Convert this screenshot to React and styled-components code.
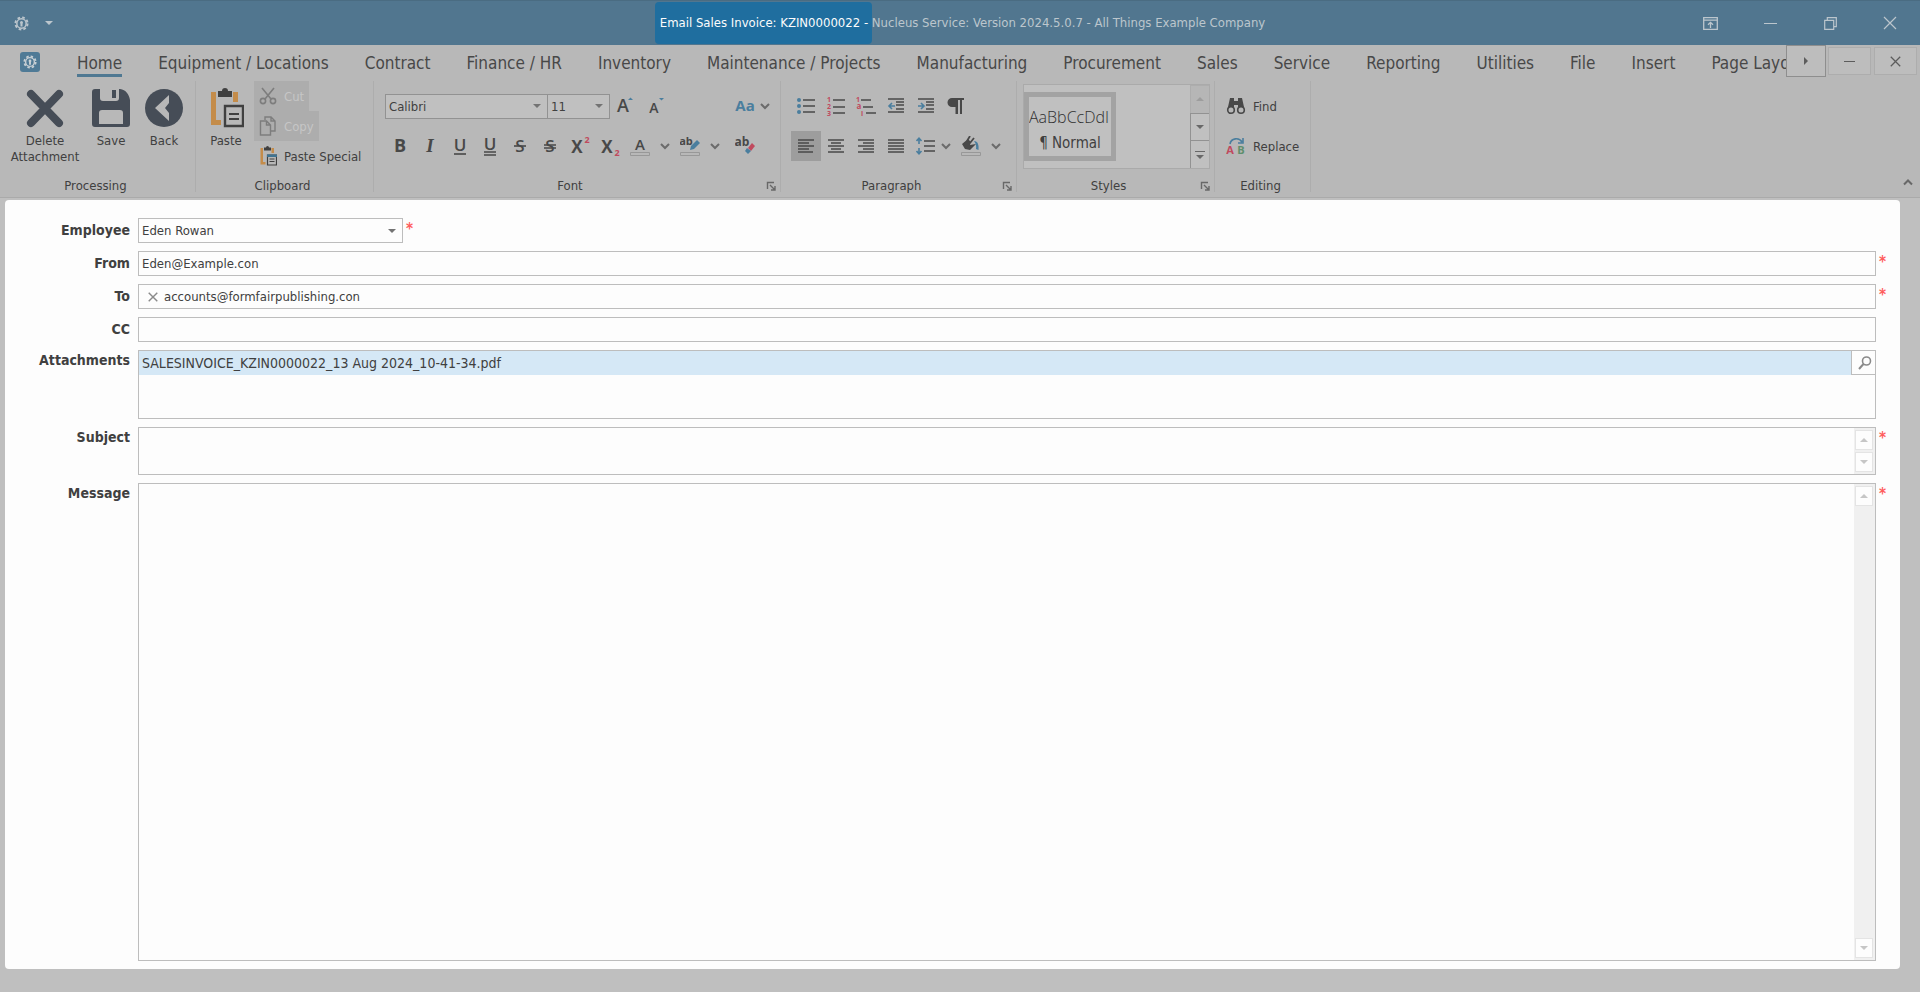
import React from "react";
import styled, { createGlobalStyle } from "styled-components";

const GlobalStyle = createGlobalStyle`
  * {
    box-sizing: border-box;
  }

  body {
    margin: 0;
    background: #bfbfbf;
    color: #404040;
    font-family: "DejaVu Sans Condensed", "Noto Sans", sans-serif;
    font-size: 13px;
  }

  button, input, select, textarea {
    font: inherit;
    color: inherit;
  }

  button {
    display: flex;
    align-items: center;
    justify-content: center;
    padding: 0;
    border: 0;
    background: none;
  }
`;

const Window = styled.div`
  display: flex;
  flex-direction: column;
  min-height: 100vh;
`;

/* title bar */

const TitleBar = styled.header`
  display: grid;
  grid-template-columns: 1fr auto 1fr;
  align-items: center;
  height: 45px;
  background: #51768f;
  border-top: 1px solid #4a6c82;
  color: #bcc6cd;
`;

const QuickAccess = styled.div`
  display: flex;
  align-items: center;
  gap: 16px;
  padding-left: 14px;
`;

const WindowTitle = styled.h1`
  display: flex;
  align-items: center;
  margin: 0;
  font-size: 13px;
  font-weight: normal;
  line-height: 42px;
  white-space: pre;
`;

const TitleMark = styled.span`
  padding-left: 5px;
  border-radius: 4px;
  background: #1f6e9f;
  color: #fcfcfc;
`;

const WindowButtons = styled.div`
  display: flex;
  justify-content: flex-end;
`;

const WindowButton = styled.button`
  width: 60px;
  height: 42px;
`;

/* tab strip */

const TabStrip = styled.nav`
  display: flex;
  height: 36px;
  background: #b8b8b8;
`;

const AppButton = styled.button`
  width: 20px;
  height: 20px;
  margin: 7px 37px 0 20px;
  flex: none;
  border-radius: 3px;
  background: #4f7a96;
  color: #c8d0d5;
`;

const Tabs = styled.div`
  display: flex;
  flex: 1;
  gap: 36px;
  min-width: 0;
  overflow: hidden;
`;

const Tab = styled.a`
  flex: none;
  height: 32px;
  border-bottom: 3px solid ${({ $active }) => ($active ? "#4f7892" : "transparent")};
  color: #484848;
  font-size: 17px;
  line-height: 36px;
  text-decoration: none;
  white-space: nowrap;
`;

const StripButton = styled.button`
  width: ${({ $scroll }) => ($scroll ? 40 : 43)}px;
  height: ${({ $scroll }) => ($scroll ? 32 : 28)}px;
  margin: ${({ $scroll }) => ($scroll ? "0 2px 0 0" : "2px 3px 0 0")};
  flex: none;
  border: 1px solid ${({ $scroll }) => ($scroll ? "#8e8e8e" : "#adadad")};
  background: #bdbdbd;
  color: #5c5c5c;
`;

/* ribbon */

const Ribbon = styled.section`
  display: flex;
  height: 117px;
  border-bottom: 1px solid #aaaaaa;
  background: #b8b8b8;
`;

const Group = styled.div`
  display: flex;
  flex-direction: column;
  flex: none;
  width: ${({ $width }) => $width}px;
  height: 111px;
  border-right: 1px solid #adadad;
`;

const GroupBody = styled.div`
  display: flex;
  flex: 1;
  padding-left: ${({ $indent }) => $indent || 0}px;
`;

const GroupFooter = styled.div`
  display: flex;
  align-items: center;
  height: 12px;
  padding-right: 4px;
  line-height: 12px;
  text-align: center;
`;

const GroupName = styled.span`
  flex: 1;
`;

const LargeButton = styled.button`
  flex-direction: column;
  justify-content: flex-start;
  align-self: flex-start;
  width: ${({ $width }) => $width}px;
  padding-top: 7px;
  line-height: 16px;

  svg {
    margin-bottom: 5px;
  }
`;

const Stack = styled.div`
  display: flex;
  flex-direction: column;
  align-items: flex-start;
  margin-top: ${({ $top }) => $top || 0}px;
  gap: ${({ $gap }) => $gap || 0}px;
`;

const SmallButton = styled.button`
  height: 30px;
  padding: 0 5px;
  gap: 7px;
  white-space: nowrap;

  &:disabled {
    background: #adadad;
    color: #c6c6c6;
  }
`;

const Tools = styled.div`
  display: flex;
  align-items: center;
  height: 30px;
`;

const Tool = styled.button`
  width: 30px;
  height: 30px;
  background: ${({ $active }) => ($active ? "#9d9d9d" : "none")};
`;

const MenuArrow = styled.button`
  width: ${({ $tight }) => ($tight ? 10 : 20)}px;
  height: 30px;
  color: #6b6b6b;
`;

const Spacer = styled.span`
  width: ${({ $width }) => $width}px;
`;

const Combo = styled.div`
  display: grid;
  grid-template-columns: 1fr 20px;
  align-items: center;
  width: ${({ $width }) => $width}px;
  height: 25px;
  border: 1px solid ${({ $muted }) => ($muted ? "#929292" : "#bdbdbd")};
  background: ${({ $muted }) => ($muted ? "#c0c0c0" : "#fdfdfd")};

  & + & {
    border-left: 0;
  }

  select {
    grid-area: 1 / 1 / 2 / 3;
    width: 100%;
    height: 100%;
    padding: 0 20px 0 3px;
    border: 0;
    background: none;
    appearance: none;
  }

  svg {
    grid-area: 1 / 2;
    justify-self: center;
    color: #737373;
    pointer-events: none;
  }
`;

const Gallery = styled.div`
  display: flex;
  width: 187px;
  height: 85px;
  margin-top: 3px;
  border: 1px solid #aaaaaa;
  background: #c0c0c0;
`;

const StyleTile = styled.button`
  flex-direction: column;
  align-items: stretch;
  justify-content: flex-start;
  width: 92px;
  height: 69px;
  margin: 7px auto 0 0;
  padding-top: 6px;
  overflow: hidden;
  border: 5px solid #a3a3a3;
  white-space: nowrap;
`;

const StyleSample = styled.span`
  overflow: hidden;
  color: #303030;
  font-family: "Open Sans", "Noto Sans", sans-serif;
  font-size: 16px;
  font-weight: 300;
  line-height: 28px;
  text-align: left;
`;

const StyleName = styled.span`
  font-size: 15px;
  line-height: 25px;
`;

const GalleryNav = styled.div`
  display: flex;
  flex-direction: column;
  width: 19px;

  button {
    flex: 1;
    border: 1px solid #929292;
    border-width: 1px 0 0 1px;
    color: #686868;
  }

  button:disabled {
    border-color: #adadad;
    background: #b6b6b6;
    color: #9d9d9d;
  }
`;

const Collapse = styled.button`
  width: 20px;
  height: 20px;
  margin: auto 2px 5px auto;
  color: #686868;
`;

/* mail form */

const Form = styled.form`
  display: flex;
  flex-direction: column;
  flex: 1;
  gap: 8px;
  margin: 2px 20px 23px 5px;
  padding: 18px 0 8px;
  border-radius: 4px;
  background: #fdfdfd;
`;

const Row = styled.div`
  display: flex;
  flex: ${({ $grow }) => ($grow ? 1 : "none")};
`;

const Label = styled.label`
  width: 125px;
  margin-right: 8px;
  flex: none;
  font-size: 14px;
  font-weight: bold;
  line-height: ${({ $top }) => ($top ? 20 : 25)}px;
  text-align: right;
`;

const Star = styled.span`
  width: 24px;
  padding-left: 3px;
  flex: none;
  color: #ff5c5c;
  font-size: 15px;
  font-weight: bold;
  line-height: 22px;
`;

const Field = styled.div`
  display: flex;
  align-items: center;
  flex: 1;
  min-width: 0;
  min-height: ${({ $height }) => $height || 25}px;
  border: 1px solid #bdbdbd;
  background: #fdfdfd;
`;

const TextInput = styled.input`
  flex: 1;
  min-width: 0;
  height: 23px;
  padding: 0 3px;
  border: 0;
  outline: 0;
  background: none;
`;

const TextArea = styled.textarea`
  flex: 1;
  align-self: stretch;
  min-width: 0;
  padding: 3px;
  border: 0;
  outline: 0;
  background: none;
  resize: none;
`;

const Token = styled.span`
  display: flex;
  align-items: center;
  gap: 6px;
  padding-left: 9px;
  color: #404040;

  button {
    color: #8a8a8a;
  }
`;

const FileList = styled.ul`
  flex: 1;
  align-self: flex-start;
  margin: 0;
  padding: 0;
  list-style: none;
`;

const FileItem = styled.li`
  height: 24px;
  padding-left: 3px;
  background: #d5e8f6;
  font-size: 14px;
  line-height: 24px;
`;

const BrowseButton = styled.button`
  justify-content: flex-end;
  align-self: flex-start;
  width: 24px;
  height: 24px;
  padding-right: 3px;
  border: 1px solid #bdbdbd;
  border-width: 0 0 1px 1px;
  color: #8a8a8a;
`;

const ScrollTrack = styled.div`
  display: flex;
  flex-direction: column;
  justify-content: space-between;
  align-self: stretch;
  width: 21px;
  padding: 2px 2px 2px 1px;
  background: #f0f0f0;

  button {
    width: 18px;
    height: 20px;
    border: 1px solid #e4e4e4;
    background: #fdfdfd;
    color: #c6c6c6;
  }
`;

/* icons */

const Triangle = ({ dir = "down", size = 8 }) => {
  const points = {
    down: "0,2 8,2 4,6",
    up: "0,6 8,6 4,2",
    right: "2,0 6,4 2,8",
  };
  return (
    <svg width={size} height={size} viewBox="0 0 8 8" fill="currentColor">
      <polygon points={points[dir]} />
    </svg>
  );
};

const Chevron = ({ up }) => (
  <svg width="10" height="10" viewBox="0 0 10 10" fill="none" stroke="currentColor" strokeWidth="2">
    <path d={up ? "M1 7.5l4-4 4 4" : "M1 3l4 4 4-4"} />
  </svg>
);

const Cross = ({ size, width = 1.2 }) => (
  <svg width={size} height={size} viewBox="0 0 14 14" fill="none" stroke="currentColor" strokeWidth={width}>
    <path d="M1 1l12 12M13 1L1 13" />
  </svg>
);

const Dash = ({ size }) => (
  <svg width={size} height="4" viewBox={`0 0 ${size} 4`}>
    <path d={`M0 2.5H${size}`} stroke="currentColor" />
  </svg>
);

const Gear = ({ size = 15 }) => (
  <svg width={size} height={size} viewBox="0 0 16 16" fill="none" stroke="currentColor">
    <circle cx="8" cy="8" r="6.5" strokeWidth="2" strokeDasharray="2.8 2.3" />
    <circle cx="8" cy="8" r="5" strokeWidth="1.6" />
    <circle cx="8" cy="6.8" r="1.6" fill="currentColor" stroke="none" />
    <path d="M8 8v3.200" strokeWidth="2.2" />
  </svg>
);

const DisplayOptions = () => (
  <svg width="15" height="13" viewBox="0 0 15 13" fill="none" stroke="currentColor" strokeWidth="1.3">
    <path d="M.7.7h13.6v11.6H.7zM.7 3.2h13.6M7.5 11V5.5M5 7.8l2.5-2.5L10 7.8" />
  </svg>
);

const Restore = () => (
  <svg width="13" height="13" viewBox="0 0 13 13" fill="none" stroke="currentColor" strokeWidth="1.2">
    <path d="M.7 3.3h9v9h-9zM3.3 3V.7h9v9H10" />
  </svg>
);

const DeleteIcon = () => (
  <svg width="38" height="40" viewBox="0 0 38 40" stroke="#464d57" strokeWidth="8" strokeLinecap="round">
    <path d="M5 6l28 29M33 6L5 35" />
  </svg>
);

const SaveIcon = () => (
  <svg width="38" height="40" viewBox="0 0 38 40">
    <path
      fillRule="evenodd"
      fill="#464d57"
      d="M3 1h5v9a3 3 0 0 0 3 3h13a3 3 0 0 0 3-3V1h1c6 1 9 5 10 11v24a3 3 0 0 1-3 3H3a3 3 0 0 1-3-3V4a3 3 0 0 1 3-3zM10 22a3 3 0 0 0-3 3v11h24V25a3 3 0 0 0-3-3z"
    />
    <path d="M20 2h4v8h-4z" fill="#464d57" />
  </svg>
);

const BackIcon = () => (
  <svg width="38" height="40" viewBox="0 0 38 40">
    <circle cx="19" cy="20" r="19" fill="#464d57" />
    <path d="M24 7v8l-4 5 4 5v8L10 20z" fill="#b8b8b8" />
  </svg>
);

const PasteIcon = ({ large }) => (
  <svg width={large ? 36 : 18} height={large ? 40 : 20} viewBox="0 0 36 40">
    <path d="M3 4h5v28h5v5H3zM25 4h5v10h-5z" fill="#c48c4a" />
    <path d="M10 3h4a3 3 0 0 1 6 0h4v6H10z" fill="#404040" />
    <path d="M17 18h18v20H17z" fill="none" stroke="#404040" strokeWidth="2.4" />
    {!large && <path d="M16 17h20v5H16z" fill="#3f7391" />}
    <path d="M21 26h10M21 31h10" stroke="#404040" strokeWidth="2.2" />
  </svg>
);

const CutIcon = () => (
  <svg width="18" height="18" viewBox="0 0 18 18" fill="none" stroke="#7d7d7d" strokeWidth="1.6">
    <circle cx="4" cy="14" r="2.6" />
    <circle cx="14" cy="14" r="2.6" />
    <path d="M3 1l9 11M15 1L6 12" />
  </svg>
);

const CopyIcon = () => (
  <svg width="18" height="20" viewBox="0 0 18 20" fill="none" stroke="#7d7d7d" strokeWidth="1.4">
    <path d="M6 4V1h6l4 4v10h-4M12 1v4h4" />
    <path d="M1.5 5h6l4 4v10h-10zM7.5 5v4h4" />
  </svg>
);

const Glyph = ({ children, size = 20 }) => (
  <svg width={size} height={size} viewBox="0 0 20 20" fontFamily="Open Sans, Noto Sans, sans-serif">
    {children}
  </svg>
);

const Letter = ({ x = 10, y = 15, size = 17, color = "#484848", weight = 600, children, ...rest }) => (
  <text x={x} y={y} fontSize={size} fill={color} fontWeight={weight} textAnchor="middle" {...rest}>
    {children}
  </text>
);

const BLUE = "#4a7e9e";
const RED = "#c04a5e";
const DARK = "#484848";

const Bars = ({ rows, color = DARK }) => (
  <path d={rows.map(([x, y, w]) => `M${x} ${y}h${w}`).join("")} stroke={color} strokeWidth="1.6" />
);

const Swatch = () => <path d="M.5 16.5h19v3H.5z" fill="none" stroke="#989898" />;

const alignRows = {
  left: [[2, 4, 16], [2, 7, 11], [2, 10, 16], [2, 13, 11], [2, 16, 15]],
  center: [[2, 4, 16], [5, 7, 10], [2, 10, 16], [5, 13, 10], [2, 16, 16]],
  right: [[2, 4, 16], [7, 7, 11], [2, 10, 16], [7, 13, 11], [2, 16, 16]],
  justify: [[2, 4, 16], [2, 7, 16], [2, 10, 16], [2, 13, 16], [2, 16, 16]],
};

const AlignIcon = ({ type }) => (
  <Glyph>
    <Bars rows={alignRows[type]} />
  </Glyph>
);

const BulletsIcon = () => (
  <Glyph>
    <circle cx="3" cy="4" r="2" fill={BLUE} />
    <circle cx="3" cy="10" r="2" fill={BLUE} />
    <circle cx="3" cy="16" r="2" fill={BLUE} />
    <Bars rows={[[7, 4, 12], [7, 10, 12], [7, 16, 12]]} />
  </Glyph>
);

const NumbersIcon = () => (
  <Glyph>
    <Letter x="3" y="6" size="7" color={RED} weight="700">1</Letter>
    <Letter x="3" y="13" size="7" color={RED} weight="700">2</Letter>
    <Letter x="3" y="20" size="7" color={RED} weight="700">3</Letter>
    <Bars rows={[[7, 4, 12], [7, 11, 12], [7, 17, 12]]} />
  </Glyph>
);

const MultiLevelIcon = () => (
  <Glyph>
    <Letter x="2" y="6" size="7" color={RED} weight="700">1</Letter>
    <Letter x="3" y="13" size="8" color={RED} weight="700">a</Letter>
    <Letter x="6" y="20" size="7" color={RED} weight="700">i</Letter>
    <Bars rows={[[5, 4, 10], [7, 11, 10], [10, 17, 10]]} />
  </Glyph>
);

const IndentIcon = ({ out }) => (
  <Glyph>
    <Bars rows={[[2, 3, 16], [2, 16, 16], [10, 6, 8], [10, 9, 8], [10, 13, 8]]} />
    <path
      d={out ? "M9 10H3M6 7l-3 3 3 3" : "M2 10h6M5 7l3 3-3 3"}
      fill="none"
      stroke={BLUE}
      strokeWidth="1.6"
    />
  </Glyph>
);

const SpacingIcon = () => (
  <Glyph>
    <path d="M3 8V2M.5 5L3 2.2 5.500 5M3 12v6M.5 15L3 17.8 5.500 15" fill="none" stroke={BLUE} strokeWidth="1.6" />
    <Bars rows={[[8, 5, 11], [8, 10, 11], [8, 15, 11]]} />
  </Glyph>
);

const FillIcon = () => (
  <Glyph>
    <path d="M1 8l6-5 3 3-1 3 6-1-6 6-5-1z" fill={DARK} />
    <path d="M6 5l3-5M9 7l4-5" stroke={DARK} strokeWidth="1.8" />
    <path d="M13 5c4 0 5 4 4.500 9l-2.500-1c.5-3 0-5-2-8z" fill={BLUE} />
    <Swatch />
  </Glyph>
);

const MarkerIcon = () => (
  <Glyph>
    <Letter x="6" y="9" size="11" weight="700">ab</Letter>
    <path d="M10 14l1-4 6-6 3 3-6 6z" fill={BLUE} />
    <Swatch />
  </Glyph>
);

const ClearIcon = () => (
  <Glyph>
    <Letter x="7" y="10" size="12" weight="700">ab</Letter>
    <path d="M13 12l4-5 3 3-4 5z" fill={RED} />
    <path d="M10 15l2-3 4 3-3 3z" fill={BLUE} />
  </Glyph>
);

const FindIcon = () => (
  <Glyph>
    <path d="M4 2h4v3h4V2h4l2 9h-6V9H8v2H2z" fill={DARK} />
    <circle cx="5" cy="14" r="3.300" fill="none" stroke={DARK} strokeWidth="1.6" />
    <circle cx="15" cy="14" r="3.300" fill="none" stroke={DARK} strokeWidth="1.6" />
  </Glyph>
);

const ReplaceIcon = () => (
  <Glyph>
    <Letter x="4" y="18" size="11" color={RED} weight="700">A</Letter>
    <Letter x="15" y="18" size="11" color="#5e8f6c" weight="700">B</Letter>
    <path d="M4 8c1-6 9-7 12-2M17 2v5h-5" fill="none" stroke={BLUE} strokeWidth="1.6" />
  </Glyph>
);

const LauncherIcon = () => (
  <svg width="10" height="10" viewBox="0 0 10 10" fill="none" stroke="#686868">
    <path d="M1.500 8V1.500H8M4 4l5 5M9 5v4H5" strokeWidth="1.4" />
  </svg>
);

const SearchIcon = () => (
  <svg width="14" height="14" viewBox="0 0 14 14" fill="none" stroke="currentColor" strokeWidth="1.6">
    <circle cx="8.500" cy="5" r="4" />
    <path d="M5.500 8L1 13" strokeWidth="2" />
  </svg>
);

/* parts */

const tabs = [
  "Home",
  "Equipment / Locations",
  "Contract",
  "Finance / HR",
  "Inventory",
  "Maintenance / Projects",
  "Manufacturing",
  "Procurement",
  "Sales",
  "Service",
  "Reporting",
  "Utilities",
  "File",
  "Insert",
  "Page Layout",
];

const RibbonGroup = ({ name, width, indent, launcher, children }) => (
  <Group $width={width}>
    <GroupBody $indent={indent}>{children}</GroupBody>
    <GroupFooter>
      <GroupName>{name}</GroupName>
      {launcher && (
        <button type="button" aria-label={`${name} settings`}>
          <LauncherIcon />
        </button>
      )}
    </GroupFooter>
  </Group>
);

const IconTool = ({ label, active, children }) => (
  <Tool type="button" aria-label={label} $active={active}>
    {children}
  </Tool>
);

const Arrow = ({ label, tight }) => (
  <MenuArrow type="button" aria-label={label} $tight={tight}>
    <Chevron />
  </MenuArrow>
);

const ScrollButtons = ({ name }) => (
  <ScrollTrack>
    <button type="button" aria-label={`Scroll ${name} up`}>
      <Triangle dir="up" />
    </button>
    <button type="button" aria-label={`Scroll ${name} down`}>
      <Triangle />
    </button>
  </ScrollTrack>
);

const FontGroup = () => (
  <RibbonGroup name="Font" width={407} indent={11} launcher>
    <Stack $top={10} $gap={10}>
      <Tools>
        <Combo $width={163} $muted>
          <select aria-label="Font name">
            <option>Calibri</option>
          </select>
          <Triangle />
        </Combo>
        <Combo $width={62} $muted>
          <select aria-label="Font size">
            <option>11</option>
          </select>
          <Triangle />
        </Combo>
        <IconTool label="Grow font">
          <Glyph>
            <Letter x="8" y="16" size="18">A</Letter>
            <path d="M13 4l2.500-2.500L18 4z" fill={BLUE} />
          </Glyph>
        </IconTool>
        <IconTool label="Shrink font">
          <Glyph>
            <Letter x="9" y="17" size="14">A</Letter>
            <path d="M14 2h5l-2.500 2.500z" fill={BLUE} />
          </Glyph>
        </IconTool>
        <Spacer $width={60} />
        <IconTool label="Change case">
          <Glyph>
            <Letter y="15" size="15" color={BLUE} weight="700">Aa</Letter>
          </Glyph>
        </IconTool>
        <Arrow label="Case options" tight />
      </Tools>
      <Tools>
        <IconTool label="Bold">
          <Glyph>
            <Letter weight="700" size="18" y="16">B</Letter>
          </Glyph>
        </IconTool>
        <IconTool label="Italic">
          <Glyph>
            <Letter fontFamily="Liberation Serif, serif" fontStyle="italic" size="19" y="16">I</Letter>
          </Glyph>
        </IconTool>
        <IconTool label="Underline">
          <Glyph>
            <Letter>U</Letter>
            <Bars rows={[[4, 18, 12]]} />
          </Glyph>
        </IconTool>
        <IconTool label="Double underline">
          <Glyph>
            <Letter y="14">U</Letter>
            <Bars rows={[[4, 16, 12], [4, 19, 12]]} />
          </Glyph>
        </IconTool>
        <IconTool label="Strikethrough">
          <Glyph>
            <Letter y="16">S</Letter>
            <Bars rows={[[4, 10, 12]]} />
          </Glyph>
        </IconTool>
        <IconTool label="Double strikethrough">
          <Glyph>
            <Letter y="16">S</Letter>
            <Bars rows={[[4, 9, 12], [4, 12, 12]]} />
          </Glyph>
        </IconTool>
        <IconTool label="Superscript">
          <Glyph>
            <Letter x="7" y="17" weight="700">X</Letter>
            <Letter x="17" y="7" size="9" color={RED} weight="700">2</Letter>
          </Glyph>
        </IconTool>
        <IconTool label="Subscript">
          <Glyph>
            <Letter x="7" y="17" weight="700">X</Letter>
            <Letter x="17" y="20" size="9" color={RED} weight="700">2</Letter>
          </Glyph>
        </IconTool>
        <IconTool label="Font color">
          <Glyph>
            <Letter y="14" size="15">A</Letter>
            <Swatch />
          </Glyph>
        </IconTool>
        <Arrow label="Font color options" />
        <IconTool label="Highlight">
          <MarkerIcon />
        </IconTool>
        <Arrow label="Highlight options" />
        <Spacer $width={5} />
        <IconTool label="Clear formatting">
          <ClearIcon />
        </IconTool>
      </Tools>
    </Stack>
  </RibbonGroup>
);

const ParagraphGroup = () => (
  <RibbonGroup name="Paragraph" width={236} indent={10} launcher>
    <Stack $top={10} $gap={10}>
      <Tools>
        <IconTool label="Bullets"><BulletsIcon /></IconTool>
        <IconTool label="Numbering"><NumbersIcon /></IconTool>
        <IconTool label="Multilevel list"><MultiLevelIcon /></IconTool>
        <IconTool label="Decrease indent"><IndentIcon out /></IconTool>
        <IconTool label="Increase indent"><IndentIcon /></IconTool>
        <IconTool label="Show paragraph marks">
          <Glyph>
            <path d="M6 2h12v2h-2v14h-2V4h-2v14h-2.500v-7H6a4.500 4.500 0 0 1 0-9z" fill={DARK} />
          </Glyph>
        </IconTool>
      </Tools>
      <Tools>
        <IconTool label="Align left" active><AlignIcon type="left" /></IconTool>
        <IconTool label="Align center"><AlignIcon type="center" /></IconTool>
        <IconTool label="Align right"><AlignIcon type="right" /></IconTool>
        <IconTool label="Justify"><AlignIcon type="justify" /></IconTool>
        <IconTool label="Line spacing"><SpacingIcon /></IconTool>
        <Arrow label="Line spacing options" tight />
        <Spacer $width={5} />
        <IconTool label="Shading"><FillIcon /></IconTool>
        <Arrow label="Shading options" />
      </Tools>
    </Stack>
  </RibbonGroup>
);

const StylesGroup = () => (
  <RibbonGroup name="Styles" width={198} indent={6} launcher>
    <Gallery>
      <StyleTile type="button">
        <StyleSample>AaBbCcDdI</StyleSample>
        <StyleName>¶ Normal</StyleName>
      </StyleTile>
      <GalleryNav>
        <button type="button" aria-label="Previous styles" disabled>
          <Triangle dir="up" />
        </button>
        <button type="button" aria-label="Next styles">
          <Triangle />
        </button>
        <button type="button" aria-label="All styles">
          <svg width="10" height="10" viewBox="0 0 10 10">
            <path d="M0 1.500h10" stroke="currentColor" />
            <path d="M1 5h8L5 9z" fill="currentColor" />
          </svg>
        </button>
      </GalleryNav>
    </Gallery>
  </RibbonGroup>
);

const App = () => {
  return (
    <Window>
      <GlobalStyle />
      <TitleBar>
        <QuickAccess>
          <button type="button" aria-label="Settings">
            <Gear />
          </button>
          <button type="button" aria-label="Customize">
            <Triangle />
          </button>
        </QuickAccess>
        <WindowTitle>
          <TitleMark>Email Sales Invoice: KZIN0000022 - </TitleMark>
          Nucleus Service: Version 2024.5.0.7 - All Things Example Company
        </WindowTitle>
        <WindowButtons>
          <WindowButton aria-label="Display options"><DisplayOptions /></WindowButton>
          <WindowButton aria-label="Minimize"><Dash size={13} /></WindowButton>
          <WindowButton aria-label="Restore"><Restore /></WindowButton>
          <WindowButton aria-label="Close"><Cross size={14} /></WindowButton>
        </WindowButtons>
      </TitleBar>

      <TabStrip>
        <AppButton aria-label="Application menu">
          <Gear size={14} />
        </AppButton>
        <Tabs>
          {tabs.map((tab, i) => (
            <Tab key={tab} href="#" $active={i === 0}>
              {tab}
            </Tab>
          ))}
        </Tabs>
        <StripButton $scroll aria-label="More tabs"><Triangle dir="right" /></StripButton>
        <StripButton aria-label="Minimize document"><Dash size={11} /></StripButton>
        <StripButton aria-label="Close document"><Cross size={11} width={1.6} /></StripButton>
      </TabStrip>

      <Ribbon>
        <RibbonGroup name="Processing" width={196} indent={6}>
          <LargeButton $width={78}>
            <DeleteIcon />
            Delete Attachment
          </LargeButton>
          <LargeButton $width={54}>
            <SaveIcon />
            Save
          </LargeButton>
          <LargeButton $width={52}>
            <BackIcon />
            Back
          </LargeButton>
        </RibbonGroup>
        <RibbonGroup name="Clipboard" width={178} indent={2}>
          <LargeButton $width={56}>
            <PasteIcon large />
            Paste
          </LargeButton>
          <Stack>
            <SmallButton disabled>
              <CutIcon />
              Cut
            </SmallButton>
            <SmallButton disabled>
              <CopyIcon />
              Copy
            </SmallButton>
            <SmallButton>
              <PasteIcon />
              Paste Special
            </SmallButton>
          </Stack>
        </RibbonGroup>
        <FontGroup />
        <ParagraphGroup />
        <StylesGroup />
        <RibbonGroup name="Editing" width={96} indent={6}>
          <Stack $top={10} $gap={10}>
            <SmallButton>
              <FindIcon />
              Find
            </SmallButton>
            <SmallButton>
              <ReplaceIcon />
              Replace
            </SmallButton>
          </Stack>
        </RibbonGroup>
        <Collapse aria-label="Collapse ribbon">
          <Chevron up />
        </Collapse>
      </Ribbon>

      <Form>
        <Row>
          <Label htmlFor="employee">Employee</Label>
          <Combo $width={265}>
            <select id="employee">
              <option>Eden Rowan</option>
            </select>
            <Triangle />
          </Combo>
          <Star>*</Star>
        </Row>
        <Row>
          <Label htmlFor="from">From</Label>
          <Field>
            <TextInput id="from" defaultValue="Eden@Example.con" />
          </Field>
          <Star>*</Star>
        </Row>
        <Row>
          <Label htmlFor="to">To</Label>
          <Field>
            <Token>
              <button type="button" aria-label="Remove recipient">
                <Cross size={10} width={2} />
              </button>
              accounts@formfairpublishing.con
            </Token>
            <TextInput id="to" />
          </Field>
          <Star>*</Star>
        </Row>
        <Row>
          <Label htmlFor="cc">CC</Label>
          <Field>
            <TextInput id="cc" />
          </Field>
          <Star />
        </Row>
        <Row>
          <Label as="span" id="attachments" $top>
            Attachments
          </Label>
          <Field $height={69}>
            <FileList aria-labelledby="attachments">
              <FileItem>SALESINVOICE_KZIN0000022_13 Aug 2024_10-41-34.pdf</FileItem>
            </FileList>
            <BrowseButton type="button" aria-label="Browse attachments">
              <SearchIcon />
            </BrowseButton>
          </Field>
          <Star />
        </Row>
        <Row>
          <Label htmlFor="subject" $top>
            Subject
          </Label>
          <Field $height={48}>
            <TextArea id="subject" rows={1} />
            <ScrollButtons name="subject" />
          </Field>
          <Star>*</Star>
        </Row>
        <Row $grow>
          <Label htmlFor="message" $top>
            Message
          </Label>
          <Field>
            <TextArea id="message" />
            <ScrollButtons name="message" />
          </Field>
          <Star>*</Star>
        </Row>
      </Form>
    </Window>
  );
};

export default App;
